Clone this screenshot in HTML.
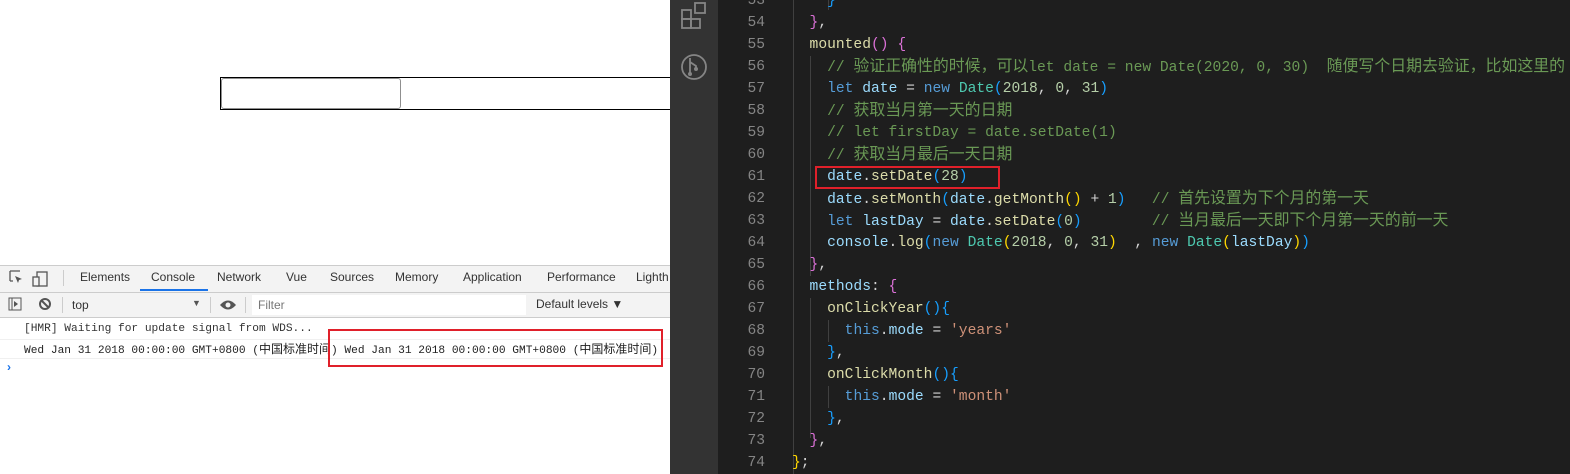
<!DOCTYPE html>
<html><head><meta charset="utf-8"><style>
*{margin:0;padding:0;box-sizing:border-box}
body{width:1570px;height:474px;overflow:hidden;position:relative;background:#fff;font-family:"Liberation Sans","Noto Sans CJK SC",sans-serif}
.abs{position:absolute}
.tab{position:absolute;top:270px;font-size:12px;color:#333}
.mono{font-family:"Liberation Mono","Noto Sans CJK SC",monospace;line-height:14px}
.cc{font-size:12px;line-height:14px}
#ed{position:absolute;left:718px;top:0;width:852px;height:474px;background:#1e1e1e;overflow:hidden}
.ln{position:absolute;left:0;width:47px;text-align:right;color:#858585;font:14.6px "Liberation Mono",monospace;line-height:22px}
.cl{position:absolute;white-space:pre;font:14.63px "Liberation Mono","Noto Sans CJK SC",monospace;line-height:22px;color:#d4d4d4}
.cj{font-size:15.9px}
.k{color:#569cd6}.v{color:#9cdcfe}.f{color:#dcdcaa}.c{color:#6a9955}.t{color:#4ec9b0}.n{color:#b5cea8}.s{color:#ce9178}.p{color:#da70d6}.y{color:#ffd700}.b{color:#179fff}
.g{position:absolute;width:1px;background:#404040}
</style></head><body>
<div class="abs" style="left:220px;top:77px;width:460px;height:33px;border:1px solid #000"></div>
<div class="abs" style="left:221px;top:78px;width:180px;height:31px;border:1px solid #8f8f8f;border-radius:3px"></div>
<div class="abs" style="left:0;top:265px;width:670px;height:1px;background:#ccc"></div>
<div class="abs" style="left:0;top:266px;width:670px;height:52px;background:#f3f3f3;border-bottom:1px solid #ccc"></div>
<div class="abs" style="left:0;top:292px;width:670px;height:1px;background:#ccc"></div>
<svg class="abs" style="left:8px;top:269px" width="50" height="20"><path d="M2 2h10M2 2v10M2 12h3" stroke="#555" fill="none" stroke-width="1.3"/><path d="M7 7l7 3-3 1-1 3z" fill="#555"/><rect x="29" y="3" width="10" height="14" fill="none" stroke="#555" stroke-width="1.3"/><rect x="25" y="8" width="6" height="9" fill="#f3f3f3" stroke="#555" stroke-width="1.3"/></svg>
<div class="abs" style="left:63px;top:270px;width:1px;height:16px;background:#ccc"></div>
<div class="tab" style="left:80px">Elements</div>
<div class="tab" style="left:151px">Console</div>
<div class="abs" style="left:140px;top:289px;width:68px;height:2px;background:#1a73e8"></div>
<div class="tab" style="left:217px">Network</div>
<div class="tab" style="left:286px">Vue</div>
<div class="tab" style="left:330px">Sources</div>
<div class="tab" style="left:395px">Memory</div>
<div class="tab" style="left:463px">Application</div>
<div class="tab" style="left:547px">Performance</div>
<div class="tab" style="left:636px">Lighth</div>
<svg class="abs" style="left:8px;top:297px" width="45" height="16"><rect x="1" y="1" width="12" height="12" fill="none" stroke="#555"/><path d="M4 1v12" stroke="#555"/><path d="M6 4l4 3-4 3z" fill="#555"/><circle cx="37" cy="7" r="5" fill="none" stroke="#555" stroke-width="2"/><path d="M33.5 3.5l7 7" stroke="#555" stroke-width="2"/></svg>
<div class="abs" style="left:62px;top:297px;width:1px;height:16px;background:#ccc"></div>
<div class="abs" style="left:72px;top:298px;font-size:12px;color:#333">top</div>
<div class="abs" style="left:192px;top:298px;font-size:9px;color:#555">▼</div>
<div class="abs" style="left:210px;top:297px;width:1px;height:16px;background:#ccc"></div>
<svg class="abs" style="left:219px;top:298px" width="20" height="14"><path d="M1 7Q9 -2 17 7Q9 16 1 7z" fill="#555"/><circle cx="9" cy="7" r="2.5" fill="#f3f3f3"/></svg>
<div class="abs" style="left:245px;top:297px;width:1px;height:16px;background:#ccc"></div>
<div class="abs" style="left:252px;top:295px;width:274px;height:20px;background:#fff"></div>
<div class="abs" style="left:258px;top:298px;font-size:12px;color:#777">Filter</div>
<div class="abs" style="left:536px;top:297px;font-size:12px;color:#333">Default levels ▼</div>
<div class="abs" style="left:0;top:339px;width:670px;height:1px;background:#f0f0f0"></div>
<div class="abs" style="left:0;top:358px;width:670px;height:1px;background:#f0f0f0"></div>
<div class="abs mono" style="left:24px;top:322px;font-size:11.2px;color:#333;white-space:pre">[HMR] Waiting for update signal from WDS...</div>
<div class="abs mono" style="left:24px;top:343px;font-size:11.2px;color:#222;white-space:pre">Wed Jan 31 2018 00:00:00 GMT+0800 (<span class="cc">中国标准时间</span>) Wed Jan 31 2018 00:00:00 GMT+0800 (<span class="cc">中国标准时间</span>)</div>
<div class="abs" style="left:328px;top:329px;width:335px;height:38px;border:2px solid #e0202a"></div>
<div class="abs" style="left:7px;top:360px;font-size:12px;color:#1a73e8;font-weight:bold">›</div>
<div class="abs" style="left:670px;top:0;width:48px;height:474px;background:#333"></div>
<svg class="abs" style="left:678px;top:0" width="34" height="84"><g fill="none" stroke="#858585" stroke-width="1.8"><rect x="4" y="10" width="9" height="9"/><rect x="4" y="19" width="9" height="9"/><rect x="13" y="19" width="9" height="9"/><rect x="17" y="3" width="10" height="10"/><circle cx="16" cy="67" r="12"/><path d="M12 58v16M12 62l6 4v2"/></g><circle cx="12" cy="74" r="2" fill="#858585"/><circle cx="18" cy="69" r="2" fill="#858585"/></svg>
<div id="ed">
<div class="g" style="left:75px;top:0;height:474px"></div>
<div class="g" style="left:92px;top:56px;height:220px"></div>
<div class="g" style="left:92px;top:298px;height:140px"></div>
<div class="g" style="left:110px;top:320px;height:22px"></div>
<div class="g" style="left:110px;top:386px;height:22px"></div>
<div class="g" style="left:110px;top:0;height:10px"></div>
</div>
<div class="abs" id="code" style="left:718px;top:0"></div>
<div class="abs" style="left:815px;top:166px;width:185px;height:23px;border:2px solid #e0202a"></div>
<script>
var L=[
[53,4,'<span class="b">}</span>'],
[54,2,'<span class="p">}</span>,'],
[55,2,'<span class="f">mounted</span><span class="p">()</span> <span class="p">{</span>'],
[56,4,'<span class="c">// 验证正确性的时候，可以let date = new Date(2020, 0, 30)  随便写个日期去验证，比如这里的</span>'],
[57,4,'<span class="k">let</span> <span class="v">date</span> = <span class="k">new</span> <span class="t">Date</span><span class="b">(</span><span class="n">2018</span>, <span class="n">0</span>, <span class="n">31</span><span class="b">)</span>'],
[58,4,'<span class="c">// 获取当月第一天的日期</span>'],
[59,4,'<span class="c">// let firstDay = date.setDate(1)</span>'],
[60,4,'<span class="c">// 获取当月最后一天日期</span>'],
[61,4,'<span class="v">date</span>.<span class="f">setDate</span><span class="b">(</span><span class="n">28</span><span class="b">)</span>'],
[62,4,'<span class="v">date</span>.<span class="f">setMonth</span><span class="b">(</span><span class="v">date</span>.<span class="f">getMonth</span><span class="y">()</span> + <span class="n">1</span><span class="b">)</span>   <span class="c">// 首先设置为下个月的第一天</span>'],
[63,4,'<span class="k">let</span> <span class="v">lastDay</span> = <span class="v">date</span>.<span class="f">setDate</span><span class="b">(</span><span class="n">0</span><span class="b">)</span>        <span class="c">// 当月最后一天即下个月第一天的前一天</span>'],
[64,4,'<span class="v">console</span>.<span class="f">log</span><span class="b">(</span><span class="k">new</span> <span class="t">Date</span><span class="y">(</span><span class="n">2018</span>, <span class="n">0</span>, <span class="n">31</span><span class="y">)</span>  , <span class="k">new</span> <span class="t">Date</span><span class="y">(</span><span class="v">lastDay</span><span class="y">)</span><span class="b">)</span>'],
[65,2,'<span class="p">}</span>,'],
[66,2,'<span class="v">methods</span>: <span class="p">{</span>'],
[67,4,'<span class="f">onClickYear</span><span class="b">(){</span>'],
[68,6,'<span class="k">this</span>.<span class="v">mode</span> = <span class="s">\'years\'</span>'],
[69,4,'<span class="b">}</span>,'],
[70,4,'<span class="f">onClickMonth</span><span class="b">(){</span>'],
[71,6,'<span class="k">this</span>.<span class="v">mode</span> = <span class="s">\'month\'</span>'],
[72,4,'<span class="b">}</span>,'],
[73,2,'<span class="p">}</span>,'],
[74,0,'<span class="y">}</span>;']];
var h='';
L.forEach(function(l){var top=12+(l[0]-54)*22;
var t=l[2].replace(/([\u3000-\u9fff\uff00-\uffef]+)/g,'<span class="cj">$1</span>');
h+='<div class="ln" style="top:'+top+'px">'+l[0]+'</div><div class="cl" style="top:'+top+'px;left:'+(74+l[1]*8.78)+'px">'+t+'</div>';});
document.getElementById('code').innerHTML=h;
</script>
</body></html>
